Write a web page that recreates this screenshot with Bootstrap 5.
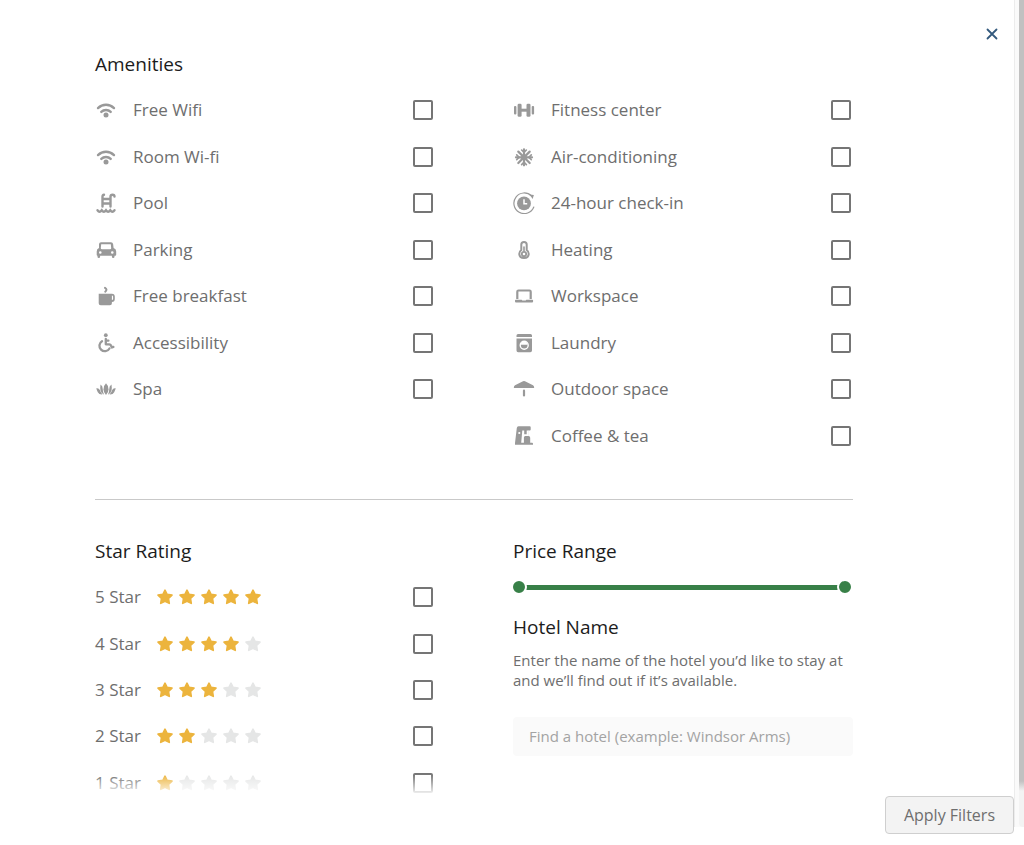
<!DOCTYPE html>
<html lang="en">
<head>
<meta charset="utf-8">
<meta name="viewport" content="width=device-width, initial-scale=1">
<title>Hotel filters</title>
<link href="https://cdn.jsdelivr.net/npm/bootstrap@5.3.0/dist/css/bootstrap.min.css" rel="stylesheet">
<style>
  body { font-family: "Open Sans", "Noto Sans", sans-serif; font-size: 17px; line-height: 24px; color: #6e6e6e; background: #fff; }
  h2 { font-size: 19px; line-height: 28px; font-weight: 400; color: #1c1c1c; margin: 0; }
  .filters { padding: 50px 171px 0 95px; }
  .filter-cols { display: grid; grid-template-columns: 1fr 1fr; column-gap: 78px; }
  .options { display: grid; grid-auto-rows: 1fr; margin: 9px 0 0; padding-right: 2px; }
  .options.eight { grid-template-rows: repeat(8, 1fr); height: 372px; }
  .options.five { height: 232px; }
  .option-row { display: flex; align-items: center; gap: 16px; cursor: pointer; }
  .option-row svg { flex: none; color: #999; }
  .option-row .form-check-input { width: 20px; height: 20px; margin: 0 0 0 auto; border: 2px solid #757575; border-radius: 2px; flex: none; }
  .rule { border-top: 1px solid #c9c9c9; opacity: 1; margin: 40px 0 37px; }
  .stars { display: flex; gap: 4px; }
  .star-row { gap: 15px; }
  .option-row .stars svg { color: #e5e6e6; }
  .option-row .stars svg.lit { color: #ecb43d; }
  .price { height: 16px; margin: 14px 0 18px -2px; }
  .price::before { content: ""; position: absolute; left: 14px; right: 14px; top: 6px; height: 5px; background: #388048; }
  .price input { appearance: none; -webkit-appearance: none; background: none; height: 16px; margin: 0; top: 0; left: 0; pointer-events: none; }
  .price input::-webkit-slider-thumb { -webkit-appearance: none; width: 16px; height: 16px; border: 2px solid #fff; border-radius: 50%; background: #388048; pointer-events: auto; }
  .price input::-moz-range-thumb { width: 12px; height: 12px; border: 2px solid #fff; border-radius: 50%; background: #388048; pointer-events: auto; }
  .hint { font-size: 15px; line-height: 20px; margin: 9px 0 27px; }
  .hotel-input { font-size: 15px; line-height: 21px; padding: 9px 16px; border: 0; border-radius: 4px; background: #fafafa; }
  .hotel-input::placeholder { color: #a3a3a3; }
  .viewport { min-height: 0; }
  .fade-out { height: 22px; background: linear-gradient(rgba(255,255,255,0), #fff); pointer-events: none; }
  .close-btn { top: 24px; right: 22px; width: 20px; height: 20px; color: #33597d; z-index: 2; }
  .apply-btn { font-size: 16px; line-height: 24px; padding: 6px 18px; border: 1px solid #cfcfcf; border-radius: 4px; background: #f3f3f3; color: #6e6e6e; }
  .footer-bar { padding: 0 10px 11px; }
  .scroll-rail { top: 0; right: 0; bottom: 18px; width: 10px; border-left: 1px solid #ececec; background: #fafafa; padding-left: 4px; }
  .scroll-thumb { height: 100%; background: linear-gradient(#c1c1c1 calc(100% - 46px), #f3f3f3 calc(100% - 36px)); border-radius: 0 0 0 4px; }
</style>
</head>
<body>
<svg class="d-none" aria-hidden="true">
  <symbol id="star" viewBox="0 0 18 18"><path fill="currentColor" stroke="currentColor" stroke-width="1.6" stroke-linejoin="round" d="M9 2.100l2.100 4.200 4.900.8-3.500 3.400.8 4.900L9 13.200l-4.300 2.200.8-4.900L2 7.100l4.900-.8z"/></symbol>
  <symbol id="wifi" viewBox="0 0 22 22"><g fill="none" stroke="currentColor" stroke-width="2.400" stroke-linecap="round"><path d="M3 9.100C7.500 4.700 14.500 4.700 19 9.100M6.300 12.900c2.600-2.500 6.800-2.500 9.400 0"/></g><circle cx="11" cy="16" r="2.500" fill="currentColor"/></symbol>
  <symbol id="pool" viewBox="0 0 22 22"><g fill="none" stroke="currentColor" stroke-width="2.400" stroke-linecap="round"><path d="M7.500 14.500V4.700Q7.500 2.700 9 2.700M15.500 14.500V4.700Q15.500 2.700 17.500 2.700Q19.500 2.700 19.500 4.500M7.500 7h8M7.500 11.500h8"/><path d="M2.500 18.300q2 2.800 4.250 0q2.100 2.800 4.250 0q2.100 2.800 4.250 0q2.100 2.800 4.250 0"/></g></symbol>
  <symbol id="car" viewBox="0 0 22 22"><path fill="currentColor" fill-rule="evenodd" d="M6 3.300h10q1.800 0 2.100 1.700l.5 4q2.600.7 2.600 3.500v3.300q0 1-1 1h-.7v1q0 1.200-1.300 1.200t-1.300-1.200v-1H5.100v1q0 1.200-1.300 1.200t-1.300-1.200v-1q-.8 0-.8-1v-3.300q0-2.800 2.300-3.500L4 5q.3-1.700 2-1.700zM6.200 5.300L5.800 9Q5.700 10.300 7 10.300h8q1.300 0 1.200-1.300l-.4-3.700zM5.300 12.200a1.300 1.300 0 100 2.600 1.300 1.300 0 000-2.600zm12 0a1.300 1.300 0 100 2.600 1.300 1.300 0 000-2.600z"/></symbol>
  <symbol id="cup" viewBox="0 0 22 22"><path fill="currentColor" fill-rule="evenodd" d="M3.700 8.700h13.200q2.900 0 2.900 2.900v2.400q0 2.900-2.900 2.900v1.300q0 2-2 2H5.700q-2 0-2-2zm13.200 1.900v4.300q1.200 0 1.200-1.200v-1.900q0-1.200-1.200-1.200z"/><path d="M10 2.800q2.800 1.800.2 3.900" fill="none" stroke="currentColor" stroke-width="2" stroke-linecap="round"/></symbol>
  <symbol id="access" viewBox="0 0 22 22"><circle cx="10.800" cy="3.200" r="1.900" fill="currentColor"/><g fill="none" stroke="currentColor" stroke-width="2.300" stroke-linecap="round" stroke-linejoin="round"><path d="M10.800 7v5.300h3.500q1.200 0 1.700 1.200l.9 2 1.500-.6M10.800 8.700h2.600"/><path d="M7 9.200A5.400 5.400 0 1014.500 16.500"/></g></symbol>
  <symbol id="spa" viewBox="0 0 22 22"><g fill="currentColor"><path d="M11 5.200q2.500 2.400 2.500 6T11 17q-2.500-2.200-2.500-5.800t2.500-6z"/><path d="M5.500 6.500q2.300 1.400 2.200 4.300 0 3 1.400 6-2.600-.7-3.600-4.200-.5-3 0-6.100zM16.500 6.500q-2.300 1.400-2.200 4.300 0 3-1.400 6 2.600-.7 3.600-4.200.5-3 0-6.100zM1.300 10.300q2.600-.5 3.500 1.700.8 2.500 2.600 4.500-3.400.2-4.600-2.300-1-1.600-1.500-3.900zM20.700 10.300q-2.600-.5-3.500 1.700-.8 2.500-2.600 4.500 3.400.2 4.600-2.300 1-1.600 1.500-3.900z"/></g></symbol>
  <symbol id="gym" viewBox="0 0 22 22"><g fill="currentColor"><rect x="1" y="7" width="2.400" height="8.500" rx="1"/><rect x="4.600" y="4.700" width="4" height="13" rx="1.300"/><rect x="8" y="9.700" width="6" height="3"/><rect x="13.500" y="4.700" width="4" height="13" rx="1.300"/><rect x="18.700" y="7" width="2.400" height="8.500" rx="1"/></g></symbol>
  <symbol id="snow" viewBox="0 0 22 22"><g stroke="currentColor" stroke-width="2.200" stroke-linecap="round" fill="none"><path d="M11 3.300v16M3 11.300h16M5.300 5.600l11.400 11.400M16.700 5.600l-11.400 11.400"/><path d="M8.600 4L11 6.400 13.400 4M8.600 18.600l2.400-2.400 2.400 2.400M3.700 8.900l2.400 2.400-2.400 2.400M18.300 8.900l-2.400 2.400 2.400 2.400" stroke-width="1.600"/></g></symbol>
  <symbol id="clock" viewBox="0 0 22 22"><circle cx="11" cy="11.400" r="6.900" fill="currentColor"/><path d="M11 7.300v4.500h3.200" fill="none" stroke="#fff" stroke-width="1.500"/><path d="M18.500 4A10.300 10.300 0 1020.800 15" fill="none" stroke="currentColor" stroke-width="1.200" stroke-linecap="round"/><path fill="currentColor" d="M16.700 2.600l4.200.5-1.300 4z"/></symbol>
  <symbol id="heat" viewBox="0 0 22 22"><path d="M8.300 11V5.500Q8.300 3 11 3t2.700 2.500V11q2 1.500 2 3.700 0 4.300-4.700 4.300t-4.700-4.300Q6.300 12.500 8.300 11z" fill="none" stroke="currentColor" stroke-width="2"/><path d="M11 8v4" stroke="currentColor" stroke-width="1.600" stroke-linecap="round"/><circle cx="11" cy="15" r="2.200" fill="none" stroke="currentColor" stroke-width="1.800"/></symbol>
  <symbol id="laptop" viewBox="0 0 22 22"><path d="M4.300 14V6.700q0-1.200 1.200-1.200h11q1.200 0 1.200 1.200V14" fill="none" stroke="currentColor" stroke-width="2.200"/><path fill="currentColor" d="M2.700 14.700h6l.6.700h3.400l.6-.7h6q.8 0 .8.700v1q0 1-1 1H3q-1 0-1-1v-1q0-.7.700-.7z"/></symbol>
  <symbol id="washer" viewBox="0 0 22 22"><path fill="currentColor" d="M5 2h12.500q1.500 0 1.500 1.500V5H3.500V3.500Q3.500 2 5 2zM3.500 6.500H19v12q0 1.700-1.700 1.700H5.200q-1.700 0-1.700-1.700z"/><circle cx="11.200" cy="13.200" r="4" fill="none" stroke="#fff" stroke-width="1.400"/><path fill="#fff" d="M8 10.800Q11.200 8.300 14.400 10.800L14.600 12.700H7.800z"/></symbol>
  <symbol id="umbrella" viewBox="0 0 22 22"><path fill="currentColor" d="M10 3.300q1-.5 2 0l8 3.900q1.200.7 1.200 2.800H.8Q.8 7.900 2 7.200z"/><path d="M11 12.700v4.800" stroke="currentColor" stroke-width="2.200" stroke-linecap="round"/></symbol>
  <symbol id="coffee" viewBox="0 0 22 22"><path fill="currentColor" d="M5.500 1.300h11.200q1 0 1 .9v2.200q0 1-1 1h-1.200v5.600q1.700 0 1.700 1.700v5.100h1.900q.9 0 .9.900v1H2V18L3.800 3q.2-1.700 1.700-1.700z"/><path fill="#fff" d="M9.300 5.400h1.900v3.900h2.500V5.400h2.100v5.600h-3.500q-1.400 0-1.400 1.500v5.200H8.200z"/><circle cx="6.300" cy="8" r="1.100" fill="#fff"/></symbol>
</svg>

<div class="vh-100 d-flex flex-column position-relative overflow-hidden">
  <button type="button" class="btn p-0 border-0 position-absolute close-btn d-flex align-items-center justify-content-center" aria-label="Close">
    <svg width="12" height="12" viewBox="0 0 12 12"><path d="M1.500 1.500l9 9M10.500 1.500l-9 9" stroke="currentColor" stroke-width="1.800" stroke-linecap="round"/></svg>
  </button>

  <main class="viewport flex-grow-1 overflow-hidden position-relative">
    <form class="filters" id="filters">
      <h2>Amenities</h2>
      <div class="filter-cols">
        <div class="options eight" data-items="wifi:Free Wifi|wifi:Room Wi-fi|pool:Pool|car:Parking|cup:Free breakfast|access:Accessibility|spa:Spa"></div>
        <div class="options eight" data-items="gym:Fitness center|snow:Air-conditioning|clock:24-hour check-in|heat:Heating|laptop:Workspace|washer:Laundry|umbrella:Outdoor space|coffee:Coffee &amp; tea"></div>
      </div>
      <hr class="rule">
      <div class="filter-cols">
        <section>
          <h2>Star Rating</h2>
          <div class="options five" id="ratings"></div>
        </section>
        <section>
          <h2>Price Range</h2>
          <div class="price position-relative">
            <input type="range" class="position-absolute w-100" min="0" max="100" value="0" aria-label="Minimum price">
            <input type="range" class="position-absolute w-100" min="0" max="100" value="100" aria-label="Maximum price">
          </div>
          <h2><label for="hotel">Hotel Name</label></h2>
          <p class="hint">Enter the name of the hotel you’d like to stay at and we’ll find out if it’s available.</p>
          <input type="text" class="form-control hotel-input" id="hotel" placeholder="Find a hotel (example: Windsor Arms)">
        </section>
      </div>
    </form>
    <div class="fade-out position-absolute bottom-0 start-0 end-0"></div>
  </main>

  <footer class="footer-bar d-flex justify-content-end">
    <button type="submit" form="filters" class="btn apply-btn">Apply Filters</button>
  </footer>
  <div class="scroll-rail position-absolute" aria-hidden="true"><div class="scroll-thumb"></div></div>
</div>

<script src="https://cdn.jsdelivr.net/npm/bootstrap@5.3.0/dist/js/bootstrap.bundle.min.js"></script>
<script>
  const box = name => `<input class="form-check-input" type="checkbox" name="${name}">`;
  document.querySelectorAll('[data-items]').forEach(list => {
    list.innerHTML = list.dataset.items.split('|').map(item => {
      const [icon, text] = item.split(':');
      return `<label class="option-row"><svg width="22" height="22" aria-hidden="true"><use href="#${icon}"/></svg><span>${text.replace('&', '&amp;')}</span>${box('amenity')}</label>`;
    }).join('');
  });
  document.getElementById('ratings').innerHTML = [5, 4, 3, 2, 1].map(n =>
    `<label class="option-row star-row"><span>${n} Star</span><span class="stars">${[1, 2, 3, 4, 5].map(i =>
      `<svg width="18" height="18" class="${i <= n ? 'lit' : ''}" aria-hidden="true"><use href="#star"/></svg>`).join('')}</span>${box('rating')}</label>`).join('');
</script>
</body>
</html>
